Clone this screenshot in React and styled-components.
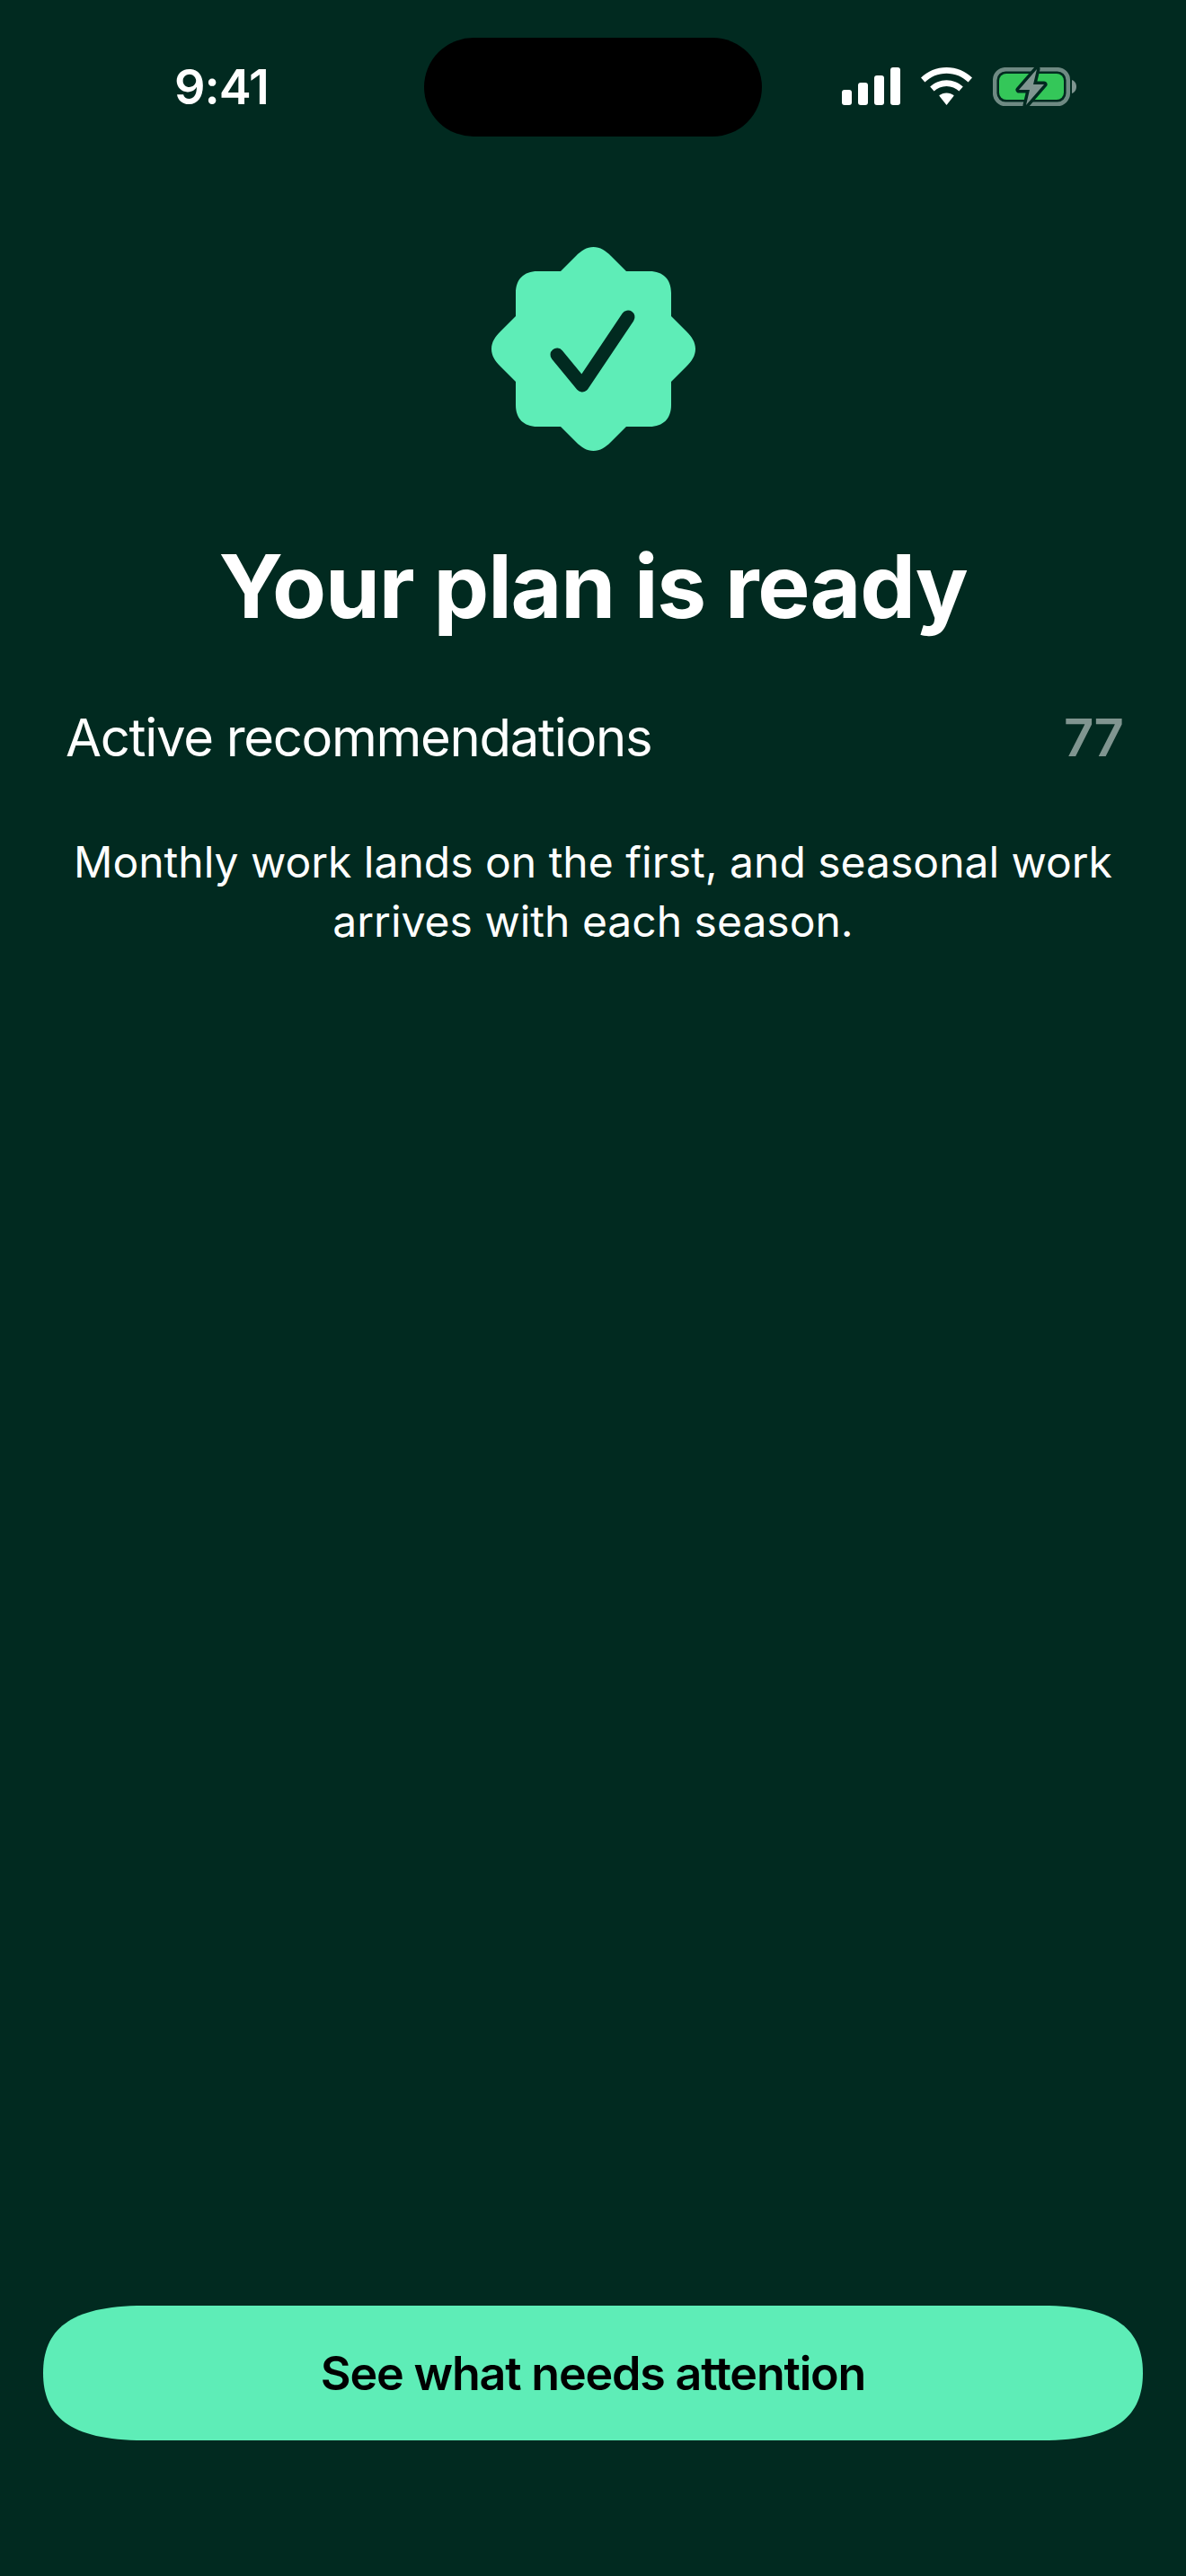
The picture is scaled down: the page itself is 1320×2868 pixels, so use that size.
import React from "react";
import styled, { createGlobalStyle } from "styled-components";

const GlobalStyle = createGlobalStyle`
  html, body {
    margin: 0;
    padding: 0;
    background: #012a20;
  }
`;

const Screen = styled.div`
  width: 1320px;
  height: 2868px;
  background: #012a20;
  color: #fff;
  font-family: Inter, "Noto Sans", sans-serif;
  display: flex;
  flex-direction: column;
  overflow: hidden;
`;

const StatusBar = styled.div`
  display: grid;
  grid-template-columns: 472px 376px 1fr;
  align-items: center;
  height: 110px;
  margin-top: 42px;
`;

const Time = styled.div`
  padding-left: 194px;
  font-size: 54px;
  font-weight: 600;
  letter-spacing: -1px;
  line-height: 110px;
`;

const Island = styled.div`
  height: 110px;
  border-radius: 55px;
  background: #000;
`;

const StatusIcons = styled.div`
  display: flex;
  align-items: flex-start;
  gap: 23px;
  padding-left: 89px;
`;

const Content = styled.div`
  display: flex;
  flex-direction: column;
  align-items: center;
  padding: 123px 73px 0;
`;

const Title = styled.h1`
  margin: 93px 0 0;
  font-size: 98px;
  line-height: 116px;
  font-weight: 700;
  letter-spacing: -1.2px;
  white-space: nowrap;
`;

const StatRow = styled.div`
  width: 100%;
  display: flex;
  justify-content: space-between;
  align-items: center;
  margin-top: 74px;
  font-size: 58px;
  letter-spacing: -1.3px;
  line-height: 72px;
`;

const StatValue = styled.span`
  font-weight: 600;
  letter-spacing: -1px;
  margin-right: -3px;
  color: #809590;
`;

const Note = styled.p`
  margin: 70px -20px 0;
  font-size: 48px;
  line-height: 66px;
  text-align: center;
`;

const ActionButton = styled.button`
  display: block;
  flex: none;
  width: 1224px;
  height: 150px;
  margin: auto 48px 151px;
  padding: 0;
  border: 0;
  background: #5eedb7;
  color: #000;
  font-family: inherit;
  font-size: 52px;
  font-weight: 600;
  letter-spacing: -1.2px;
  clip-path: path("M112 0H1112C1196 0 1224 28 1224 75C1224 122 1196 150 1112 150H112C28 150 0 122 0 75C0 28 28 0 112 0Z");
`;

function SignalIcon() {
  return (
    <svg width="65" height="42" viewBox="0 0 65 42" fill="#fff">
      <rect x="0" y="25" width="11" height="17" rx="3" />
      <rect x="18" y="17" width="11" height="25" rx="3" />
      <rect x="36" y="9" width="11" height="33" rx="3" />
      <rect x="54" y="0" width="11" height="42" rx="3" />
    </svg>
  );
}

function WifiIcon() {
  return (
    <svg width="57" height="42" viewBox="0 0 57 42" fill="#fff">
      <path d="M28.5 0C39.6 0 49.6 4.4 57 11.6L52.6 16.6C46.4 10.5 37.9 6.8 28.5 6.8C19.1 6.8 10.6 10.5 4.4 16.6L0 11.6C7.4 4.4 17.4 0 28.5 0Z" />
      <path d="M28.5 14.2C35.6 14.2 42 17 46.8 21.6L42.4 26.6C38.8 23.2 33.9 21 28.5 21C23.1 21 18.2 23.2 14.6 26.6L10.2 21.6C15 17 21.4 14.2 28.5 14.2Z" />
      <path d="M28.5 28.4C31.7 28.4 34.6 29.6 36.8 31.6L28.5 42L20.2 31.6C22.4 29.6 25.3 28.4 28.5 28.4Z" />
    </svg>
  );
}

function BatteryIcon() {
  return (
    <svg width="93" height="44" viewBox="0 0 93 44">
      <rect x="2.2" y="2.2" width="81.6" height="38.6" rx="12" fill="none" stroke="#6f8a83" strokeWidth="4.5" />
      <rect x="7" y="7" width="72" height="29" rx="8" fill="#34c759" />
      <path d="M88 14C91 15 93 18 93 21.5C93 25 91 28 88 29Z" fill="#7f9590" />
      <path
        d="M49 2L29 25H41L37 42L57 19H45Z"
        fill="#7f9590"
        stroke="#012a20"
        strokeWidth="7"
        strokeLinejoin="round"
        paintOrder="stroke"
      />
    </svg>
  );
}

function VerifiedBadge() {
  return (
    <svg width="227" height="227" viewBox="0 0 227 227">
      <path
        d="M113.5 0C121 0 127 4 133 10L150 27H176C191 27 200 36 200 51V77L217 94C223 100 227 106 227 113.5C227 121 223 127 217 133L200 150V176C200 191 191 200 176 200H150L133 217C127 223 121 227 113.5 227C106 227 100 223 94 217L77 200H51C36 200 27 191 27 176V150L10 133C4 127 0 121 0 113.5C0 106 4 100 10 94L27 77V51C27 36 36 27 51 27H77L94 10C100 4 106 0 113.5 0Z"
        fill="#5eedb7"
      />
      <path
        d="M73 120L101 154L152 78"
        fill="none"
        stroke="#012a20"
        strokeWidth="15"
        strokeLinecap="round"
        strokeLinejoin="round"
      />
    </svg>
  );
}

export default function App() {
  return (
    <Screen>
      <GlobalStyle />
      <StatusBar>
        <Time>9:41</Time>
        <Island />
        <StatusIcons>
          <SignalIcon />
          <WifiIcon />
          <BatteryIcon />
        </StatusIcons>
      </StatusBar>
      <Content>
        <VerifiedBadge />
        <Title>Your plan is ready</Title>
        <StatRow>
          <span>Active recommendations</span>
          <StatValue>77</StatValue>
        </StatRow>
        <Note>
          Monthly work lands on the first, and seasonal work arrives with each season.
        </Note>
      </Content>
      <ActionButton>See what needs attention</ActionButton>
    </Screen>
  );
}
